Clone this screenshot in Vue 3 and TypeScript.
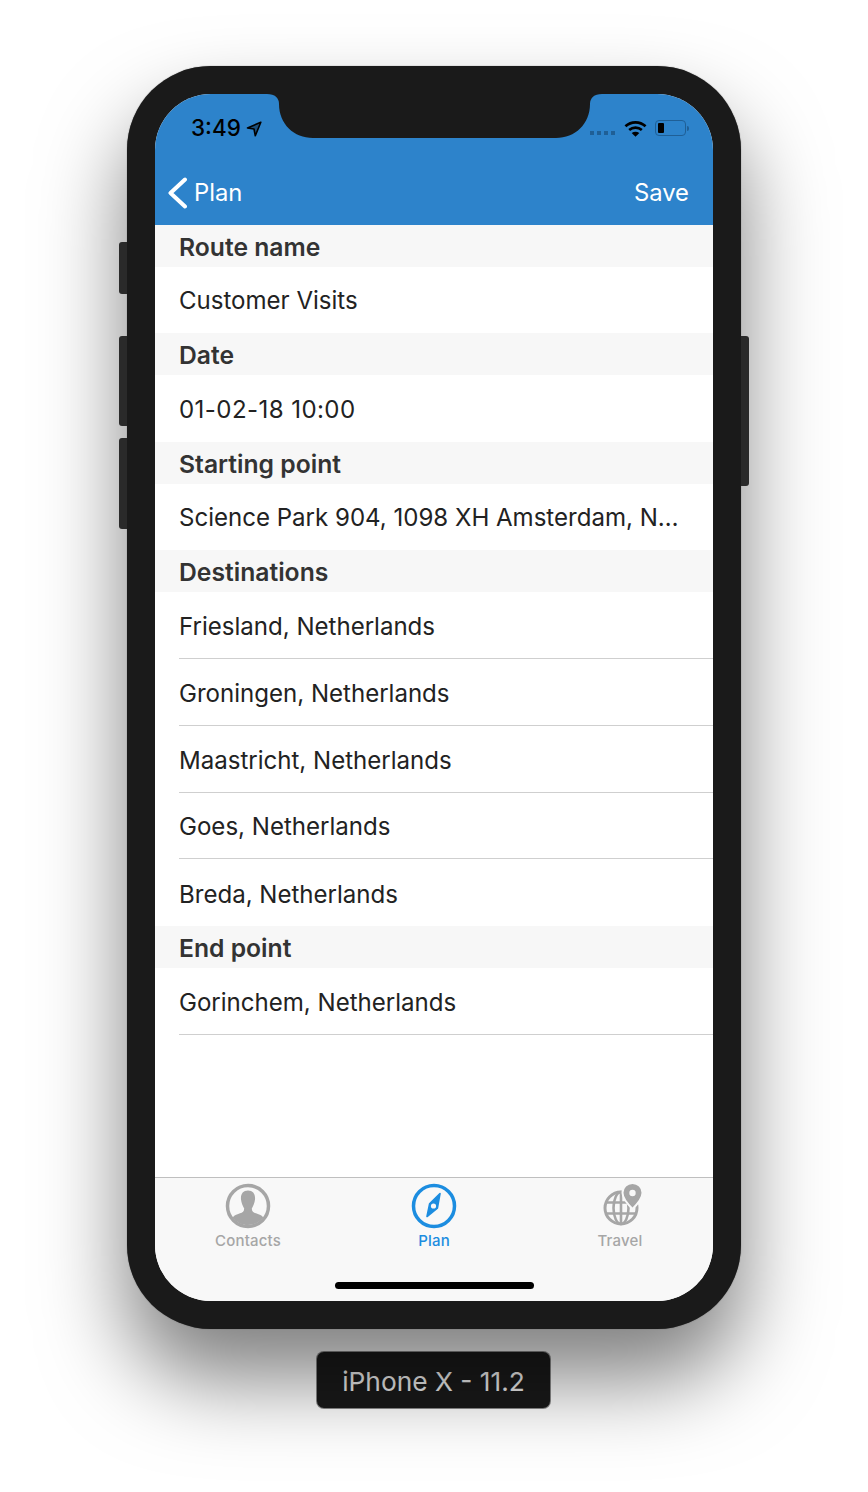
<template>
  <div class="page">
    <div class="phone">
      <span class="side side--mute"></span>
      <span class="side side--up"></span>
      <span class="side side--down"></span>
      <span class="side side--power"></span>

      <div class="screen">
        <svg class="notch" viewBox="0 0 335 44" width="335" height="44">
          <path d="M0 0H335C327 0 323 4 323 10C323 30 308 44 289 44H46C27 44 12 30 12 10C12 4 8 0 0 0Z" fill="#1a1a1a" />
        </svg>

        <header class="top">
          <div class="status">
            <div class="status-left">
              <span class="time">3:49</span>
              <svg class="arrow" viewBox="0 0 16 16" width="16" height="16">
                <path d="M14.800 1.200L1.500 7L8 8L9.300 14.800Z" fill="rgba(0,0,0,0.4)" stroke="#000" stroke-width="1.600" stroke-linejoin="round" />
              </svg>
            </div>
            <div class="status-right">
              <div class="signal">
                <i v-for="n in 4" :key="n"></i>
              </div>
              <svg class="wifi" viewBox="0 0 24 17" width="23" height="17">
                <path d="M1.500 6.200C7.500 .8 16.500 .8 22.500 6.200" fill="none" stroke="#000" stroke-width="2.800" />
                <path d="M5.400 10C9.200 6.800 14.800 6.800 18.600 10" fill="none" stroke="#000" stroke-width="2.800" />
                <path d="M8 13.200C10.500 11.400 13.500 11.400 16 13.200L12 17Z" fill="#000" />
              </svg>
              <div class="battery">
                <span class="battery-level"></span>
              </div>
              <span class="battery-tip"></span>
            </div>
          </div>
          <nav class="nav">
            <div class="back">
              <svg viewBox="0 0 20 32" width="20" height="32">
                <path d="M18 2.500L3.500 16L18 29.500" fill="none" stroke="#fff" stroke-width="4" stroke-linecap="round" stroke-linejoin="round" />
              </svg>
              <span>Plan</span>
            </div>
            <span class="save">Save</span>
          </nav>
        </header>

        <main class="content">
          <section v-for="group in groups" :key="group.title">
            <h2 class="group-title">{{ group.title }}</h2>
            <div
              v-for="(row, i) in group.rows"
              :key="row"
              class="row"
              :class="{
                'row--line': group.lined && (i < group.rows.length - 1 || group.title === 'End point'),
                'row--inset': group.lined,
                'row--date': group.title === 'Date',
              }"
            >
              <span>{{ row }}</span>
            </div>
          </section>
        </main>

        <footer class="tabs">
          <div class="tab-items">
            <div class="tab">
              <svg viewBox="0 0 46 46" width="46" height="46">
                <circle cx="23" cy="23" r="20.500" fill="none" stroke="#a6a6a6" stroke-width="3.500" />
                <path d="M23 7.500C28 7.500 30.500 11 30 16.500C29.700 20 28 23.500 26.800 25.500C26.800 28.500 28.500 29.500 31 30.300C34.500 31.500 37 32.500 38.200 34.500C34.500 39.500 29 42 23 42C17 42 11.500 39.500 7.800 34.500C9 32.500 11.500 31.500 15 30.300C17.500 29.500 19.200 28.500 19.200 25.500C18 23.500 16.300 20 16 16.500C15.500 11 18 7.500 23 7.500Z" fill="#a6a6a6" />
              </svg>
              <span>Contacts</span>
            </div>
            <div class="tab tab--active">
              <svg viewBox="0 0 46 46" width="46" height="46">
                <circle cx="23" cy="23" r="20.500" fill="none" stroke="#1c8de0" stroke-width="3.500" />
                <path d="M29 10.500L26.400 25.200L16 33.500L18.600 20.800Z" fill="#1c8de0" stroke="#1c8de0" stroke-width="1.600" stroke-linejoin="round" />
                <circle cx="22.500" cy="23" r="2.600" fill="#f8f8f8" />
              </svg>
              <span>Plan</span>
            </div>
            <div class="tab">
              <svg viewBox="0 0 46 46" width="46" height="46">
                <circle cx="24" cy="25" r="16" fill="none" stroke="#a6a6a6" stroke-width="3" />
                <ellipse cx="24" cy="25" rx="7.500" ry="16" fill="none" stroke="#a6a6a6" stroke-width="2.600" />
                <path d="M9 19.500H39M9 30.500H39M24 9V41" fill="none" stroke="#a6a6a6" stroke-width="2.600" />
                <path d="M35.500 0C29.800 0 25.500 4.500 25.500 9.800C25.500 15 31 21.500 35.500 26C40 21.500 45.500 15 45.500 9.800C45.500 4.500 41.200 0 35.500 0Z" fill="#a6a6a6" stroke="#f8f8f8" stroke-width="2" />
                <circle cx="35.500" cy="10" r="3.200" fill="#f8f8f8" />
              </svg>
              <span>Travel</span>
            </div>
          </div>
          <div class="home-bar"></div>
        </footer>
      </div>
    </div>

    <div class="device-label">iPhone X - 11.2</div>
  </div>
</template>

<script setup lang="ts">
interface Group {
  title: string
  rows: string[]
  lined?: boolean
}

const groups: Group[] = [
  { title: 'Route name', rows: ['Customer Visits'] },
  { title: 'Date', rows: ['01-02-18 10:00'] },
  { title: 'Starting point', rows: ['Science Park 904, 1098 XH Amsterdam, N…'] },
  {
    title: 'Destinations',
    rows: [
      'Friesland, Netherlands',
      'Groningen, Netherlands',
      'Maastricht, Netherlands',
      'Goes, Netherlands',
      'Breda, Netherlands',
    ],
    lined: true,
  },
  { title: 'End point', rows: ['Gorinchem, Netherlands'], lined: true },
]
</script>

<style>
html,
body {
  margin: 0;
  background: #fff;
}
</style>

<style scoped>
.page {
  width: 868px;
  height: 1492px;
  box-sizing: border-box;
  padding-top: 66px;
  display: flex;
  flex-direction: column;
  align-items: center;
  overflow: hidden;
  font-family: Inter, "Liberation Sans", sans-serif;
}

.phone {
  position: relative;
  width: 614px;
  height: 1263px;
  box-sizing: border-box;
  padding: 28px;
  flex: none;
  background: #1a1a1a;
  border-radius: 84px;
  box-shadow: 0 0 1px #555, 0 50px 85px rgba(0, 0, 0, 0.5);
}

.side {
  position: absolute;
  width: 8px;
  background: #2a2a2a;
}

.side--mute {
  left: -8px;
  top: 176px;
  height: 52px;
  border-radius: 3px 0 0 3px;
}

.side--up {
  left: -8px;
  top: 270px;
  height: 90px;
  border-radius: 3px 0 0 3px;
}

.side--down {
  left: -8px;
  top: 372px;
  height: 91px;
  border-radius: 3px 0 0 3px;
}

.side--power {
  right: -8px;
  top: 270px;
  height: 150px;
  border-radius: 0 3px 3px 0;
}

.screen {
  position: relative;
  height: 1207px;
  display: flex;
  flex-direction: column;
  overflow: hidden;
  background: #fff;
  border-radius: 56px;
}

.notch {
  position: absolute;
  top: 0;
  left: 112px;
}

.top {
  height: 131px;
  flex: none;
  background: #2d83cb;
  display: flex;
  flex-direction: column;
}

.status {
  height: 68px;
  box-sizing: border-box;
  padding: 0 24px 0 36px;
  display: flex;
  justify-content: space-between;
  align-items: center;
}

.status-left,
.status-right {
  display: flex;
  align-items: center;
}

.time {
  margin-top: -2px;
  font-size: 22.500px;
  font-weight: 500;
  color: #000;
}

.arrow {
  margin: 2px 0 0 5px;
}

.signal {
  display: flex;
  gap: 3px;
  margin: 10px 9px 0 0;
}

.signal i {
  width: 4px;
  height: 4px;
  background: #1f5f96;
}

.wifi {
  margin-right: 8px;
}

.battery {
  width: 31px;
  height: 16px;
  box-sizing: border-box;
  padding: 2px;
  border: 1px solid #1f5f96;
  border-radius: 4px;
}

.battery-level {
  display: block;
  width: 6px;
  height: 10px;
  background: #000;
  border-radius: 1px;
}

.battery-tip {
  width: 2px;
  height: 5px;
  margin-left: 1px;
  background: #1f5f96;
  border-radius: 0 2px 2px 0;
}

.nav {
  flex: 1;
  padding: 0 24px 2px 12px;
  display: flex;
  justify-content: space-between;
  align-items: center;
  color: #fff;
  font-size: 23.800px;
}

.back {
  display: flex;
  align-items: center;
  gap: 7px;
}

.content {
  flex: 1;
  min-height: 0;
}

.group-title {
  height: 41.700px;
  margin: 0;
  padding-left: 24px;
  background: #f7f7f7;
  color: #333;
  font-size: 24.700px;
  font-weight: 600;
  line-height: 44px;
}

.row {
  height: 66.800px;
  box-sizing: border-box;
  margin-left: 24px;
  padding-top: 1px;
  display: flex;
  align-items: center;
  font-size: 24.050px;
  color: #222;
}

.row--inset {
  padding-top: 3px;
}

.row--line {
  border-bottom: 1px solid #cfcfcf;
}

.row--date {
  letter-spacing: 0.430px;
}

.tabs {
  height: 124px;
  flex: none;
  box-sizing: border-box;
  border-top: 1px solid #bfbfbf;
  background: #f8f8f8;
  display: flex;
  flex-direction: column;
  align-items: center;
}

.tab-items {
  width: 100%;
  flex: 1;
  display: grid;
  grid-template-columns: repeat(3, 1fr);
}

.tab {
  display: flex;
  flex-direction: column;
  align-items: center;
  gap: 2px;
  padding-top: 5px;
  color: #a6a6a6;
  font-size: 15px;
  font-weight: 500;
  letter-spacing: 0.2px;
  line-height: 20px;
}

.tab--active {
  color: #1c8de0;
}

.home-bar {
  width: 199px;
  height: 7px;
  margin-bottom: 12px;
  background: #000;
  border-radius: 4px;
}

.device-label {
  margin: 22px 0 0 -1px;
  width: 235px;
  height: 58px;
  flex: none;
  padding-top: 2px;
  display: flex;
  align-items: center;
  justify-content: center;
  box-sizing: border-box;
  background: #1a1a1a;
  border: 1px solid rgba(255, 255, 255, 0.5);
  border-radius: 8px;
  color: #f0f0f0;
  font-size: 26.300px;
}
</style>
